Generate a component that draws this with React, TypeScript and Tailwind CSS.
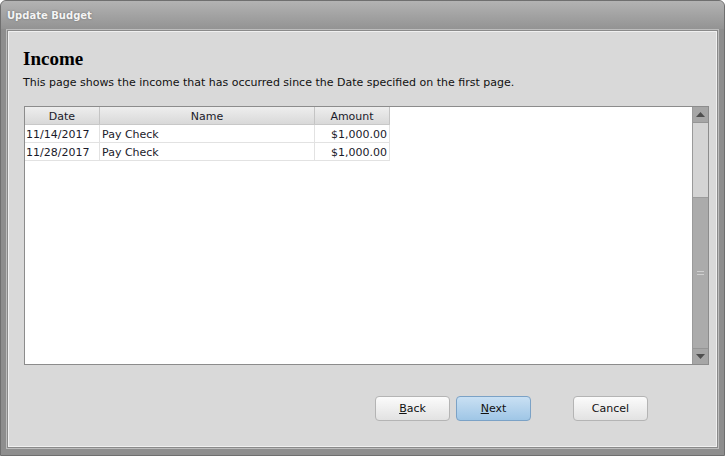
import React from 'react';

const rows = [
  { date: '11/14/2017', name: 'Pay Check', amount: '$1,000.00' },
  { date: '11/28/2017', name: 'Pay Check', amount: '$1,000.00' },
];

const Btn: React.FC<{ children: React.ReactNode; primary?: boolean }> = ({ children, primary }) => (
  <button
    className={`w-[75px] h-[25px] rounded-[4px] border text-[11px] text-[#111] pt-[1px] ${
      primary
        ? 'border-[#7ba2c6] bg-gradient-to-b from-[#c9e0f3] to-[#9fc6e6]'
        : 'border-[#b4b4b4] bg-gradient-to-b from-[#fbfbfb] to-[#e2e2e2]'
    }`}
  >
    {children}
  </button>
);

export default function App() {
  return (
    <div
      className="w-[725px] h-[456px] bg-[#8e8e8e] border border-[#6f6f6f] rounded-t-[6px] flex flex-col overflow-hidden"
      style={{ fontFamily: '"DejaVu Sans", Verdana, sans-serif' }}
    >
      {/* title bar */}
      <div className="h-[28px] shrink-0 flex items-center px-[6px] pt-[1px] bg-gradient-to-b from-[#b3b3b3] to-[#939393]">
        <span className="text-[10px] font-bold text-[#f4f4f4] [text-shadow:0_0_2px_#666]">Update Budget</span>
      </div>

      <div className="flex-1 flex flex-col px-[5px] pb-[6px]">
        <div className="flex-1 flex flex-col border border-[#bdbdbd]">
          <div className="flex-1 flex flex-col border border-[#8a8a8a]">
            <div className="flex-1 flex flex-col bg-[#d9d9d9] border border-[#f0f0f0] pl-[14px] pr-[7px]">
              <h1
                className="mt-[16px] text-[19px] leading-[22px] font-bold text-black"
                style={{ fontFamily: '"Liberation Serif", "Times New Roman", serif' }}
              >
                Income
              </h1>
              <p className="mt-[6px] text-[11px] leading-[14px] text-[#111]">
                This page shows the income that has occurred since the Date specified on the first page.
              </p>

              {/* table box */}
              <div className="mt-[16px] ml-[1px] h-[259px] flex border border-[#8c8c8c] bg-white">
                <div className="flex-1 text-[11px] leading-[13px] text-[#1a1a2a]">
                  <div className="flex h-[18px] w-[365px] border-b border-[#c8c8c8] bg-gradient-to-b from-[#eeeeee] to-[#d9d9d9]">
                    <div className="w-[75px] border-r border-[#c4c4c4] flex items-center justify-center pt-[2px]">Date</div>
                    <div className="w-[215px] border-r border-[#c4c4c4] flex items-center justify-center pt-[2px]">Name</div>
                    <div className="w-[75px] border-r border-[#c4c4c4] flex items-center justify-center pt-[2px]">Amount</div>
                  </div>
                  {rows.map((r) => (
                    <div key={r.date} className="flex h-[18px] w-[365px] border-b border-[#e2e2e2]">
                      <div className="w-[75px] border-r border-[#e2e2e2] flex items-center pl-[1px] pt-[2px]">{r.date}</div>
                      <div className="w-[215px] border-r border-[#e2e2e2] flex items-center pl-[2px] pt-[2px]">{r.name}</div>
                      <div className="w-[75px] border-r border-[#e2e2e2] flex items-center justify-end pr-[2px] pt-[2px]">{r.amount}</div>
                    </div>
                  ))}
                </div>

                {/* scrollbar */}
                <div className="w-[16px] flex flex-col bg-[#a9a9a9] border-l border-[#9a9a9a]">
                  <div className="h-[16px] flex items-center justify-center bg-[#a6a6a6] border-b border-[#959595]">
                    <svg width="9" height="5" viewBox="0 0 9 5">
                      <path d="M0 5 L4.5 0 L9 5 Z" fill="#4e4e4e" />
                    </svg>
                  </div>
                  <div className="h-[75px] bg-[#d4d4d4] border-b border-[#9c9c9c]" />
                  <div className="flex-1 flex items-center justify-center bg-[#ababab]">
                    <svg width="7" height="5" viewBox="0 0 7 5">
                      <rect x="0" y="0" width="7" height="1" fill="#cfcfcf" />
                      <rect x="0" y="3" width="7" height="1" fill="#cfcfcf" />
                    </svg>
                  </div>
                  <div className="h-[16px] flex items-center justify-center bg-[#a6a6a6] border-t border-[#959595]">
                    <svg width="9" height="5" viewBox="0 0 9 5">
                      <path d="M0 0 L9 0 L4.5 5 Z" fill="#4e4e4e" />
                    </svg>
                  </div>
                </div>
              </div>

              {/* buttons */}
              <div className="mt-[31px] flex pl-[352px]">
                <Btn>
                  <span className="underline">B</span>ack
                </Btn>
                <div className="w-[6px]" />
                <Btn primary>
                  <span className="underline">N</span>ext
                </Btn>
                <div className="w-[42px]" />
                <Btn>Cancel</Btn>
              </div>
            </div>
          </div>
        </div>
      </div>
    </div>
  );
}
